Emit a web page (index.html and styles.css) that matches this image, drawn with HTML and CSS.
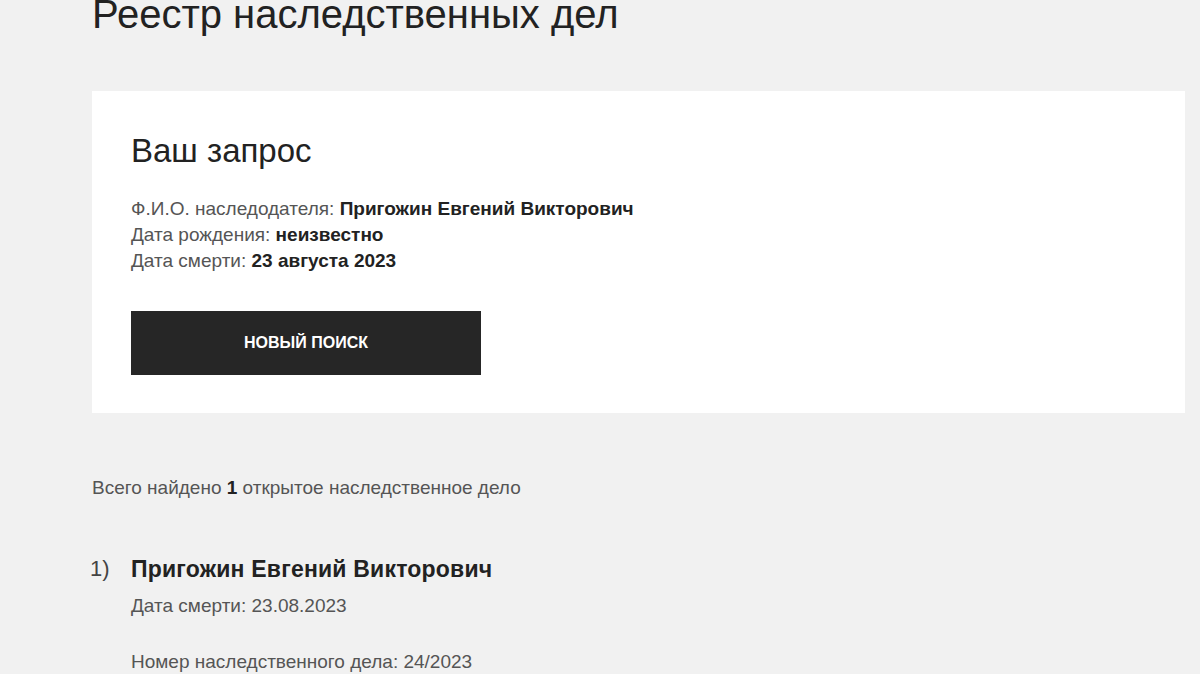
FILE: index.html
```html
<!DOCTYPE html>
<html lang="ru">
<head>
<meta charset="utf-8">
<link rel="stylesheet" href="styles.css">
</head>
<body>
<main class="page">
  <h1 class="title">Реестр наследственных дел</h1>
  <section class="card">
    <h2 class="card-title">Ваш запрос</h2>
    <div class="info">
      <p>Ф.И.О. наследодателя: <b>Пригожин Евгений Викторович</b></p>
      <p>Дата рождения: <b>неизвестно</b></p>
      <p>Дата смерти: <b>23 августа 2023</b></p>
    </div>
    <button class="btn">Новый поиск</button>
  </section>
  <p class="total">Всего найдено <b>1</b> открытое наследственное дело</p>
  <ol class="results">
    <li class="result">
      <span class="num">1)</span>
      <div class="result-body">
        <h3 class="name">Пригожин Евгений Викторович</h3>
        <p class="meta">Дата смерти: 23.08.2023</p>
        <p class="meta meta-gap">Номер наследственного дела: 24/2023</p>
      </div>
    </li>
  </ol>
</main>
</body>
</html>
```

FILE: styles.css
```css
html, body {
  margin: 0;
  padding: 0;
  background: #f1f1f1;
}
body {
  font-family: "Liberation Sans", Arial, sans-serif;
  color: #222;
  overflow: hidden;
}
.page {
  padding: 0 15px 0 92px;
}
.title {
  margin: -10px 0 0;
  font-size: 40px;
  font-weight: 400;
  line-height: 48px;
  color: #222;
}
.card {
  margin-top: 53px;
  background: #fff;
  padding: 41px 39px 38px;
}
.card-title {
  margin: 0;
  font-size: 33px;
  font-weight: 400;
  line-height: 38px;
  color: #222;
}
.info {
  margin-top: 26px;
}
.info p {
  margin: 0;
  font-size: 19px;
  line-height: 26px;
  color: #555;
}
.info b {
  color: #222;
}
.btn {
  display: block;
  margin-top: 37px;
  width: 350px;
  height: 64px;
  border: 0;
  background: #262626;
  color: #fff;
  font-family: "Liberation Sans", Arial, sans-serif;
  font-size: 16px;
  font-weight: 700;
  text-transform: uppercase;
  cursor: pointer;
}
.total {
  margin: 62px 0 0;
  font-size: 19px;
  line-height: 26px;
  color: #555;
}
.total b {
  color: #222;
}
.results {
  list-style: none;
  margin: 53px 0 0;
  padding: 0;
}
.result {
  display: flex;
}
.num {
  width: 39px;
  margin-left: -2px;
  font-size: 22px;
  line-height: 30px;
  color: #444;
}
.result-body {
  margin-left: 2px;
}
.name {
  margin: 0;
  font-size: 23px;
  font-weight: 700;
  letter-spacing: 0.2px;
  line-height: 30px;
  color: #222;
}
.meta {
  margin: 9px 0 0;
  font-size: 19px;
  line-height: 26px;
  color: #555;
}
.meta-gap {
  margin-top: 30px;
}
```
